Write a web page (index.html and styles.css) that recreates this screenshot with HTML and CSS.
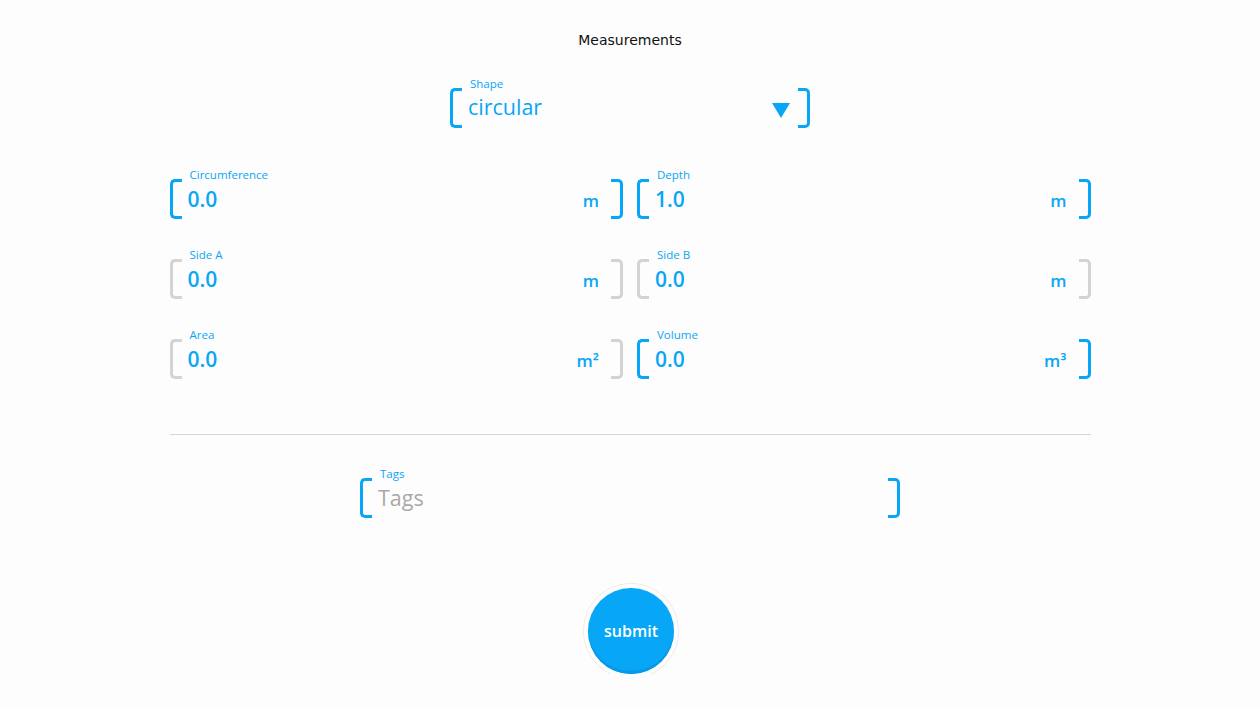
FILE: index.html
```html
<!DOCTYPE html>
<html>
<head>
<meta charset="utf-8">
<title>Measurements</title>
<link rel="stylesheet" href="styles.css">
</head>
<body>
<main class="page">
  <h1 class="title">Measurements</h1>

  <div class="field field-shape">
    <span class="br br-l"></span>
    <div class="mid">
      <label class="lbl">Shape</label>
      <div class="row">
        <span class="val val-lg">circular</span>
        <svg class="caret" width="18" height="15" viewBox="0 0 18 15"><path d="M0 0H18L9 15Z" fill="#07a6f6"/></svg>
      </div>
    </div>
    <span class="br br-r"></span>
  </div>

  <div class="grid">
    <div class="field">
      <span class="br br-l"></span>
      <div class="mid"><label class="lbl">Circumference</label>
        <div class="row"><span class="val">0.0</span><span class="unit">m</span></div></div>
      <span class="br br-r"></span>
    </div>
    <div class="field">
      <span class="br br-l"></span>
      <div class="mid"><label class="lbl">Depth</label>
        <div class="row"><span class="val">1.0</span><span class="unit">m</span></div></div>
      <span class="br br-r"></span>
    </div>
    <div class="field off">
      <span class="br br-l"></span>
      <div class="mid"><label class="lbl">Side A</label>
        <div class="row"><span class="val">0.0</span><span class="unit">m</span></div></div>
      <span class="br br-r"></span>
    </div>
    <div class="field off">
      <span class="br br-l"></span>
      <div class="mid"><label class="lbl">Side B</label>
        <div class="row"><span class="val">0.0</span><span class="unit">m</span></div></div>
      <span class="br br-r"></span>
    </div>
    <div class="field off">
      <span class="br br-l"></span>
      <div class="mid"><label class="lbl">Area</label>
        <div class="row"><span class="val">0.0</span><span class="unit">m²</span></div></div>
      <span class="br br-r"></span>
    </div>
    <div class="field">
      <span class="br br-l"></span>
      <div class="mid"><label class="lbl">Volume</label>
        <div class="row"><span class="val">0.0</span><span class="unit">m³</span></div></div>
      <span class="br br-r"></span>
    </div>
  </div>

  <hr class="divider">

  <div class="field field-tags">
    <span class="br br-l"></span>
    <div class="mid"><label class="lbl">Tags</label>
      <div class="row"><span class="val val-lg placeholder">Tags</span></div></div>
    <span class="br br-r"></span>
  </div>

  <div class="actions">
    <button class="submit">submit</button>
  </div>
</main>
</body>
</html>
```

FILE: styles.css
```css
* { box-sizing: border-box; }
html, body { margin: 0; padding: 0; }
body {
  background: #fdfdfd;
  font-family: "Open Sans", "Noto Sans", sans-serif;
  color: #07a6f6;
}
.page {
  width: 921px;
  margin: 0 auto;
  display: flex;
  flex-direction: column;
  align-items: center;
}
.title {
  margin: 30px 0 0;
  font-family: "DejaVu Sans", sans-serif;
  font-size: 14px;
  font-weight: 500;
  line-height: 20px;
  color: #111;
}
.field {
  display: flex;
  align-items: flex-end;
  height: 50px;
  width: 100%;
}
.field-shape { width: 360px; margin-top: 28px; }
.field-tags { width: 540px; margin-top: 33px; }
.br {
  flex: 0 0 12px;
  height: 40px;
  border: 3px solid #07a6f6;
}
.br-l { border-right: none; border-radius: 5px 0 0 5px; }
.br-r { border-left: none; border-radius: 0 5px 5px 0; }
.off .br { border-color: #d3d3d3; }
.mid {
  flex: 1;
  height: 50px;
  display: flex;
  flex-direction: column;
  min-width: 0;
}
.lbl {
  display: block;
  height: 12px;
  line-height: 12px;
  font-size: 11.5px;
  font-weight: 500;
  padding-left: 8px;
  color: #07a6f6;
}
.row {
  flex: 1;
  display: flex;
  align-items: baseline;
  justify-content: space-between;
  padding: 5px 12px 0 6px;
}
.val {
  font-size: 21px;
  font-weight: 600;
  line-height: 26px;
}
.val-lg { font-size: 21.5px; font-weight: 500; }
.placeholder { color: #a9a9a9; }
.unit {
  font-size: 17px;
  font-weight: 600;
}
.caret { align-self: center; margin-right: -4px; margin-top: 6px; }
.field-shape .row { align-items: center; padding-top: 0; padding-bottom: 4px; }
.grid {
  width: 100%;
  margin-top: 41px;
  display: grid;
  grid-template-columns: 1fr 1fr;
  column-gap: 14px;
  row-gap: 30px;
}
.divider {
  width: 100%;
  margin: 55px 0 0;
  border: none;
  border-top: 1px solid #d6d6d6;
  height: 0;
}
.actions {
  margin-top: 70px;
  display: flex;
  justify-content: center;
}
.submit {
  width: 86px;
  height: 86px;
  border-radius: 50%;
  border: none;
  background: #07a6f6;
  color: #fff;
  font-family: "Open Sans", sans-serif;
  font-weight: 600;
  font-size: 16px;
  box-shadow: inset 0 -3px 0 #0799e6, 0 0 0 4px #fdfdfd, 0 0 0 5px #ececec;
  margin-left: 2px;
  cursor: pointer;
}
```
